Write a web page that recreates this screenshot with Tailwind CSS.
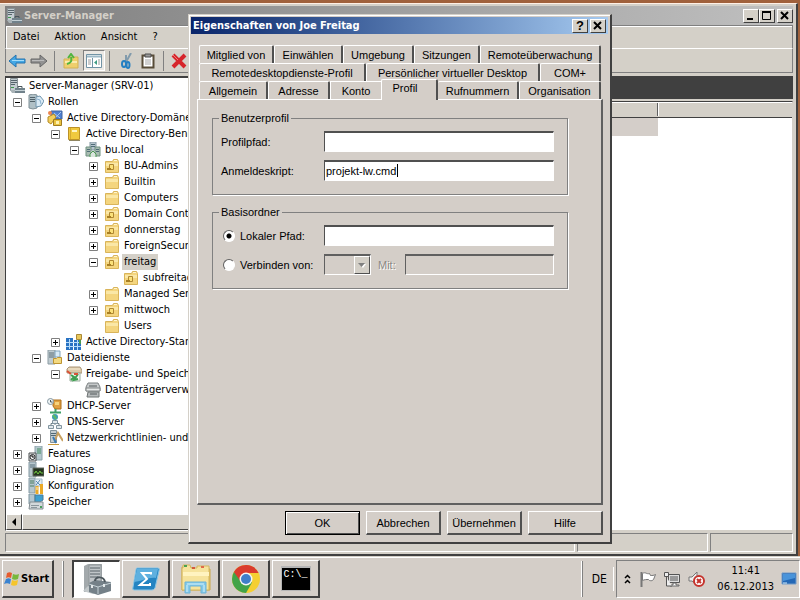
<!DOCTYPE html>
<html lang="de">
  <head>
    <title>Server-Manager</title>
    <meta charset="UTF-8" />
    <meta name="viewport" content="width=device-width, initial-scale=1.0" />
    <script src="https://cdn.jsdelivr.net/npm/@tailwindcss/browser@4"></script>
  </head>

  <body class="h-screen flex flex-col overflow-hidden bg-[#a0613c] text-black text-[11px] leading-4 font-['DejaVu_Sans_Condensed','DejaVu_Sans',sans-serif]">
    <!-- Icon definitions -->
    <svg class="hidden">
      <symbol id="server" viewBox="0 0 16 16">
        <path d="M1.500.5h7v12h-7z" fill="#c3ccd0" stroke="#8a9498" />
        <path d="M2 2.500h6M2 4.500h6M2 6.500h4" stroke="#56646c" />
        <path d="M2 9h3v1H2z" fill="#3d9a4c" />
        <path d="M1 12h6v3H3z" fill="#a9b3b7" />
        <path d="M6 10h10v5H6z" fill="#71828b" />
        <path d="M6 12.500h10" stroke="#c4d0d5" />
        <path d="M9 10V8.500h4V10" fill="none" stroke="#49565c" />
      </symbol>
      <symbol id="roles" viewBox="0 0 16 16">
        <path d="M1 1l4-1 4 1v13l-4 1-4-1z" fill="#b0c0c6" stroke="#7f8f96" />
        <path d="M2 3.500h5M2 5.500h5M2 7.500h5" stroke="#52636b" />
        <path d="M8 3l4-1 4 5-3 5-5 1z" fill="#d9eaf5" stroke="#7296ae" />
        <path d="M9 5l3 1 1 4" fill="none" stroke="#8bb2d0" />
      </symbol>
      <symbol id="addomain" viewBox="0 0 16 16">
        <path d="M4 1h11v8H4z" fill="#4f7fd0" stroke="#4366a0" />
        <path d="M7 3l6 5M14 2L8 8" stroke="#a9c8ef" />
        <path d="M1 7l6-3 2 3-5 7-3-2z" fill="#f3cf5c" stroke="#b58b26" />
        <path d="M6.500 9.500h8v6h-8z" fill="#e9c342" stroke="#a07d20" />
        <path d="M9 11h3v3H9z" fill="#fff3b0" />
        <circle cx="3" cy="3" r="2" fill="#ec8550" />
      </symbol>
      <symbol id="book" viewBox="0 0 16 16">
        <path d="M2.500 1.500h11v12h-11z" fill="#f0c93e" stroke="#bc9228" />
        <path d="M6 4h5v2H6z" fill="#fff5c1" />
        <path d="M4.500 2v11" stroke="#d6ab30" />
        <path d="M3 14.500h11" stroke="#8f8560" />
      </symbol>
      <symbol id="domain" viewBox="0 0 16 16">
        <path d="M5 0h6v8H5z" fill="#b7c4cd" stroke="#8598a3" />
        <path d="M1 5h5v9H1zM10 5h5v9h-5z" fill="#a9bcb2" stroke="#6f9080" />
        <path d="M6 2.500h4M6 4.500h4M2 7.500h3M11 7.500h3M2 9.500h3M11 9.500h3" stroke="#4f6d76" />
        <path d="M5 15v-3l3-3 3 3v3" fill="#d9e4dd" stroke="#4f9a55" />
      </symbol>
      <symbol id="folder" viewBox="0 0 16 16">
        <path d="M1.500 3.500h7l1-2h4l1 2v11h-13z" fill="#f4d57e" stroke="#d9b45a" />
        <path d="M2 5h12v3H2z" fill="#fae7a6" />
        <path d="M10 2.500h3" stroke="#fff5cf" />
      </symbol>
      <symbol id="ou" viewBox="0 0 16 16">
        <use href="#folder" />
        <path d="M5.500 6.500h4v5h-4z" fill="#fbe179" stroke="#b08832" />
        <path d="M3 10h4v2H3z" fill="#a87f24" />
      </symbol>
      <symbol id="sites" viewBox="0 0 16 16">
        <path d="M0 4h7v12H0zM8 6h7v10H8z" fill="#2872c3" />
        <path d="M3.500 5v10M0 8.500h15M0 12.500h15M11.500 6v10" stroke="#b7dcfa" />
        <path d="M10.500.5h5v5h-5z" fill="#e9c85a" stroke="#aa8938" />
        <path d="M14 6v4" stroke="#4a9a52" stroke-width="2" />
      </symbol>
      <symbol id="fileserver" viewBox="0 0 16 16">
        <path d="M1 0h7v14H1z" fill="#c0ccd1" stroke="#8b9ba3" />
        <path d="M2 3h5M2 5h5M2 7h5" stroke="#5a6f79" />
        <path d="M8 1h5v6H8z" fill="#d9ebf7" stroke="#80a3ba" />
        <path d="M6.500 8.500h3l1-1h4v6h-8z" fill="#f3d980" stroke="#bd9433" />
      </symbol>
      <symbol id="share" viewBox="0 0 16 16">
        <path d="M1 3l2-2h11l2 3v3H1z" fill="#dcc9a8" stroke="#a89478" />
        <path d="M2 3h12" stroke="#f4ead4" />
        <path d="M4 7h10v8H4z" fill="#f3f6ef" stroke="#9cae9f" />
        <path d="M5 9l3 2-3 3M12 8l-4 6 4-1" stroke="#3d9f50" stroke-width="2" fill="none" />
        <path d="M1 5l4 3M8 8h4" fill="none" stroke="#d95137" stroke-width="2" />
      </symbol>
      <symbol id="disk" viewBox="0 0 16 16">
        <path d="M3 1h10l2 4v4H1V5z" fill="#c6c9ca" stroke="#7d8283" />
        <path d="M1 6h14v3H1z" fill="#e6e8e8" stroke="#818586" />
        <path d="M3 10h11v5H2z" fill="#b7bbbc" stroke="#6f7474" />
        <path d="M4 4h8M5 12h7" stroke="#555b5d" />
      </symbol>
      <symbol id="dhcp" viewBox="0 0 16 16">
        <path d="M6 2h8v9H8L6 8z" fill="#e0a040" stroke="#ae6f1b" />
        <path d="M8 4h4v3H8z" fill="#f8d37b" />
        <circle cx="3.500" cy="3.500" r="3" fill="#edf3f5" stroke="#8496a0" />
        <path d="M3.500 2v2h2" stroke="#45545c" fill="none" />
        <path d="M8.500 11v3M3 14.500h11" stroke="#3d9f68" stroke-width="2" />
      </symbol>
      <symbol id="dns" viewBox="0 0 16 16">
        <circle cx="8" cy="3" r="3" fill="#3f9db4" />
        <path d="M6 1l2 2 1 2" stroke="#59bc61" stroke-width="2" fill="none" />
        <path d="M8 6v5M4 12V9.500h8V12" stroke="#6d7f85" fill="none" />
        <path d="M5.500 6.500h5v3h-5zM1.500 11.500h5v3h-5zM9.500 11.500h5v3h-5z" fill="#e2e9ec" stroke="#8295a0" />
      </symbol>
      <symbol id="policy" viewBox="0 0 16 16">
        <path d="M3.500.5h6v12h-6z" fill="#c5ced2" stroke="#82939b" />
        <path d="M4 3.500h5M4 5.500h5" stroke="#506874" />
        <path d="M8 10l3-7 5 8" fill="none" stroke="#c7a060" stroke-width="2" />
        <path d="M6 7l3 6" stroke="#3b7ab5" stroke-width="2" />
        <path d="M1 14.500h11" stroke="#c8983d" />
      </symbol>
      <symbol id="features" viewBox="0 0 16 16">
        <path d="M7 0h7v14H7z" fill="#b5c8ce" stroke="#8da2aa" />
        <path d="M9 3h4M9 5h4M9 7h4" stroke="#3e8a5c" />
        <path d="M1 7h7v8H1z" fill="#e2e4e5" stroke="#4d5153" />
        <circle cx="4.500" cy="11" r="2.500" fill="#fff" stroke="#272a2b" />
        <path d="M4 9v2h2" stroke="#000" fill="none" />
      </symbol>
      <symbol id="diagnose" viewBox="0 0 16 16">
        <path d="M1 0h7v15H1z" fill="#b9c8ce" stroke="#8397a1" />
        <path d="M2 3h5M2 5h5" stroke="#546c78" />
        <path d="M5 6h11v8H5z" fill="#25331f" stroke="#606860" />
        <path d="M6 11h1l1-2 2 3 2-3 1 2h2" fill="none" stroke="#70c744" />
      </symbol>
      <symbol id="config" viewBox="0 0 16 16">
        <path d="M1 0h6v15H1z" fill="#b5c6ce" stroke="#869aa4" />
        <path d="M2 3h4M2 5h4M2 8h4" stroke="#4c7f61" />
        <path d="M7 1h7v7H7z" fill="#e2edf4" stroke="#9fb6c5" />
        <path d="M8 3l4 4M12 2L8 7" stroke="#5989b0" />
        <path d="M9 8v8M13.500 6v10" stroke="#eaa927" stroke-width="3" />
        <path d="M9 9v3" stroke="#fff3c4" />
      </symbol>
      <symbol id="storage" viewBox="0 0 16 16">
        <path d="M1 0h6v10H1z" fill="#b2c5cf" stroke="#7f959f" />
        <path d="M7 1h8v5l-3 2H7z" fill="#3fa0cf" stroke="#487b97" />
        <path d="M2 8h13v7H1z" fill="#d3d8db" stroke="#838d92" />
        <path d="M3 11.500h8M3 13.500h6" stroke="#8b969c" />
        <path d="M12 12h2v2h-2z" fill="#499f5b" />
      </symbol>
    </svg>

    <!-- Desktop starts here -->
    <main class="relative flex-1 min-h-0 pt-[3px] pr-[2px]">
      <!-- Server-Manager window -->
      <section class="h-full flex flex-col bg-[#d4d0c8] border-t border-r-2 border-b-2 border-t-[#fff0e6] border-r-[#404040] border-b-[#404040] pl-[5px] pr-[3px] pt-[2px]">
        <header class="flex items-center h-[19px] pl-px gap-[2px] bg-linear-to-r from-[#808080] to-[#c0c0c0]">
          <svg class="size-4"><use href="#server" /></svg>
          <h1 class="flex-1 font-bold text-[#d4d0c8]">Server-Manager</h1>
          <button aria-label="Minimieren" class="w-4 h-[14px] bg-[#d4d0c8] border border-t-white border-l-white border-r-[#404040] border-b-[#404040]">
            <svg viewBox="0 0 14 12" class="w-[14px] h-3"><path d="M3 9h6" stroke="#000" stroke-width="2" /></svg>
          </button>
          <button aria-label="Maximieren" class="w-4 h-[14px] -ml-[2px] bg-[#d4d0c8] border border-t-white border-l-white border-r-[#404040] border-b-[#404040]">
            <svg viewBox="0 0 14 12" class="w-[14px] h-3"><path d="M2.500 2v7.500h8V2M2 2h9" fill="none" stroke="#000" /><path d="M2 2h9" stroke="#000" stroke-width="2" /></svg>
          </button>
          <button aria-label="Schließen" class="w-4 h-[14px] bg-[#d4d0c8] border border-t-white border-l-white border-r-[#404040] border-b-[#404040]">
            <svg viewBox="0 0 14 12" class="w-[14px] h-3"><path d="M3 2l7 7M10 2L3 9" stroke="#000" stroke-width="2" /></svg>
          </button>
        </header>

        <nav class="flex items-center gap-[15px] h-6 px-[7px] border border-[#808080] border-b-white shadow-[inset_1px_1px_#fff]">
          <button>Datei</button>
          <button>Aktion</button>
          <button>Ansicht</button>
          <button>?</button>
        </nav>

        <div class="flex items-center h-6 px-[2px] border-x border-b border-[#808080]">
          <button aria-label="Zurück" class="w-5">
            <svg viewBox="0 0 18 16" class="w-[18px] h-4"><path d="M1 8l7-6v4h9v4H8v4z" fill="#45a8e5" stroke="#2573ae" /><path d="M4 7.500h12" stroke="#a4ddfa" /></svg>
          </button>
          <button aria-label="Vorwärts" class="w-6 pl-[2px]">
            <svg viewBox="0 0 18 16" class="w-[18px] h-4"><path d="M17 8l-7-6v4H1v4h9v4z" fill="#929292" stroke="#666" /><path d="M2 7.500h12" stroke="#bbb" /></svg>
          </button>
          <span class="h-5 w-px bg-[#808080] ml-[2px] mr-2"></span>
          <button aria-label="Eine Ebene nach oben">
            <svg viewBox="0 0 16 16" class="size-4"><path d="M1 6h5l1-2h8v11H1z" fill="#efcf6d" stroke="#d3b256" /><path d="M2 9h12" stroke="#fbebad" stroke-width="2" /><path d="M4 11c4-1 5-3 4-7M5 5l3-4 3 4" fill="none" stroke="#4fb53f" stroke-width="2" /></svg>
          </button>
          <button aria-label="Konsolenstruktur" class="flex items-center justify-center w-[22px] h-[21px] ml-1 bg-[#ece9e5] border border-t-[#808080] border-l-[#808080] border-r-white border-b-white">
            <svg viewBox="0 0 16 14" class="w-4 h-[14px]"><path d="M.5.5h15v13H.5z" fill="#fff" stroke="#7193a5" /><path d="M1 2.500h14" stroke="#9cb8c7" stroke-width="2" /><path d="M2 6h3M2 8h3M2 10h3M12 6h2M12 8h2M12 10h2" stroke="#9a9a9a" /><path d="M6.500 4v9" stroke="#7193a5" /><path d="M11 6v5L8 8.500z" fill="#3e9b82" /></svg>
          </button>
          <span class="h-5 w-px bg-[#808080] ml-1 mr-2"></span>
          <button aria-label="Ausschneiden">
            <svg viewBox="0 0 16 16" class="size-4"><path d="M13 0L8 9M8 2v8" stroke="#829bac" stroke-width="2" /><ellipse cx="6" cy="11" rx="2" ry="3" fill="none" stroke="#247fc2" stroke-width="2" /><ellipse cx="10" cy="12" rx="1.500" ry="3" fill="none" stroke="#247fc2" stroke-width="2" /></svg>
          </button>
          <button aria-label="Einfügen" class="ml-[7px]">
            <svg viewBox="0 0 14 16" class="w-[14px] h-4"><path d="M1.500 2.500h11v12h-11z" fill="#fff" stroke="#584c38" stroke-width="2" /><path d="M4 1h6v3H4z" fill="#999" stroke="#4d4d4d" /><path d="M4 7h6M4 9h6M4 11h6" stroke="#a4a4a4" /></svg>
          </button>
          <span class="h-5 w-px bg-[#808080] ml-2 mr-[7px]"></span>
          <button aria-label="Löschen">
            <svg viewBox="0 0 16 16" class="size-4"><path d="M2 2l12 12M14 2L2 14" stroke="#d6252b" stroke-width="4" /><path d="M2 2l5 5" stroke="#f27c78" /></svg>
          </button>
        </div>

        <div class="flex flex-1 min-h-0 gap-1 mt-[3px]">
          <!-- Console tree -->
          <aside class="flex flex-col w-[184px] shrink-0 bg-white border border-t-2 border-t-[#404040] border-l-[#404040] border-r-white border-b-white">
            <div id="tree" class="flex-1 overflow-hidden whitespace-nowrap"></div>
            <div class="flex h-4 bg-[#dedbd6]">
              <button aria-label="Nach links" class="flex items-center justify-center w-4 bg-[#d4d0c8] border border-t-white border-l-white border-r-[#404040] border-b-[#404040]">
                <svg viewBox="0 0 4 8" class="w-1 h-2"><path d="M4 0v8L0 4z" /></svg>
              </button>
              <div class="flex-1 bg-[#d4d0c8] border border-r-0 border-t-white border-l-white border-b-[#404040]"></div>
            </div>
          </aside>

          <!-- Details pane -->
          <section class="flex flex-col flex-1">
            <div class="h-[23px] bg-[#404040]"></div>
            <div class="flex-1 mt-[2px] bg-white border border-t-[#404040] border-l-[#404040] border-b-[#d4d0c8] border-r-[#d4d0c8]">
              <div class="flex h-4 bg-[#d4d0c8] border-b border-[#404040] shadow-[inset_0_1px_#fff]">
                <div class="w-[464px] my-px border-r border-[#606060]"></div>
                <div class="flex-1 my-px border-l border-white"></div>
              </div>
              <div class="w-[464px] h-[18px] bg-[#d4cec9]"></div>
            </div>
          </section>
        </div>

        <footer class="flex gap-[2px] h-[19px] mt-[2px] mb-[2px]">
          <div class="flex-1 border border-[#808080] border-r-white border-b-white"></div>
          <div class="w-[131px] border border-[#808080] border-r-white border-b-white"></div>
          <div class="w-[83px] border border-[#808080] border-r-white border-b-white"></div>
        </footer>
      </section>

      <!-- Properties dialog -->
      <section role="dialog" aria-labelledby="dialogTitle" class="absolute left-[188px] top-[14px] w-[424px] bg-[#d4cec8] border border-[#d4d0c8] border-r-2 border-b-2 border-r-[#404040] border-b-[#404040] shadow-[inset_1px_1px_#fff] p-[2px] pb-[7px] font-['Liberation_Sans',Arial,sans-serif]">
        <header class="flex items-center h-[17px] pl-[2px] pr-[2px] gap-[2px] bg-linear-to-r from-[#0a246a] to-[#a6caf0]">
          <h2 id="dialogTitle" class="flex-1 font-bold text-white font-['DejaVu_Sans_Condensed','DejaVu_Sans',sans-serif]">Eigenschaften von Joe Freitag</h2>
          <button aria-label="Hilfe" class="w-4 h-[14px] bg-[#d4d0c8] border border-t-white border-l-white border-r-[#404040] border-b-[#404040] text-[13px] leading-3 font-bold">?</button>
          <button aria-label="Schließen" class="w-4 h-[14px] bg-[#d4d0c8] border border-t-white border-l-white border-r-[#404040] border-b-[#404040]">
            <svg viewBox="0 0 14 12" class="w-[14px] h-3"><path d="M3 2l7 7M10 2L3 9" stroke="#000" stroke-width="2" /></svg>
          </button>
        </header>

        <div class="pt-[11px] pl-[6px] pr-[5px]">
          <!-- Tabs -->
          <div role="tablist" class="px-[2px]">
            <div class="flex h-[18px]">
              <button role="tab" class="w-[75px] border-t border-l border-white border-r-2 border-r-[#505050] rounded-t-xs">Mitglied von</button>
              <button role="tab" class="w-[69px] border-t border-l border-white border-r-2 border-r-[#505050] rounded-t-xs">Einwählen</button>
              <button role="tab" class="w-[71px] border-t border-l border-white border-r-2 border-r-[#505050] rounded-t-xs">Umgebung</button>
              <button role="tab" class="w-[66px] border-t border-l border-white border-r-2 border-r-[#505050] rounded-t-xs">Sitzungen</button>
              <button role="tab" class="flex-1 border-t border-l border-white border-r-2 border-r-[#505050] rounded-t-xs">Remoteüberwachung</button>
            </div>
            <div class="flex h-[18px]">
              <button role="tab" class="w-[167px] border-t border-l border-white border-r-2 border-r-[#505050] rounded-t-xs">Remotedesktopdienste-Profil</button>
              <button role="tab" class="w-[174px] border-t border-l border-white border-r-2 border-r-[#505050] rounded-t-xs">Persönlicher virtueller Desktop</button>
              <button role="tab" class="flex-1 border-t border-l border-white border-r-2 border-r-[#505050] rounded-t-xs">COM+</button>
            </div>
            <div class="flex h-[18px] items-end">
              <button role="tab" class="w-[69px] h-[18px] border-t border-l border-white border-r-2 border-r-[#505050] rounded-t-xs">Allgemein</button>
              <button role="tab" class="w-[62px] h-[18px] border-t border-l border-white border-r-2 border-r-[#505050] rounded-t-xs">Adresse</button>
              <button role="tab" class="w-[51px] h-[18px] border-t border-l border-white">Konto</button>
              <button role="tab" aria-selected="true" class="relative w-[57px] h-[21px] -mb-px pb-1 pr-2 bg-[#d4cec8] border-t border-l border-white border-r-2 border-r-[#505050] rounded-t-xs">Profil</button>
              <button role="tab" class="w-[81px] h-[18px] border-t border-white border-r-2 border-r-[#505050] rounded-t-xs">Rufnummern</button>
              <button role="tab" class="flex-1 h-[18px] border-t border-l border-white border-r-2 border-r-[#505050] rounded-t-xs">Organisation</button>
            </div>
          </div>

          <!-- Profile tab -->
          <form role="tabpanel" class="min-h-[406px] pt-3 pl-[14px] pr-[33px] border border-white border-r-2 border-b-2 border-r-[#606060] border-b-[#606060]">
            <fieldset class="h-[83px] pl-2 pr-[13px] border border-[#808080] shadow-[1px_1px_#fff]">
              <legend class="px-[2px] -ml-[2px] leading-3">Benutzerprofil</legend>
              <div class="flex items-center h-[21px] mt-[7px]">
                <label for="profilePath" class="w-[103px]">Profilpfad:</label>
                <input id="profilePath" type="text" class="flex-1 min-w-0 h-[21px] px-px bg-white border border-t-2 border-[#505050] border-r-white border-b-white" />
              </div>
              <div class="flex items-center h-[21px] mt-2">
                <label for="loginScript" class="w-[103px]">Anmeldeskript:</label>
                <div class="relative flex flex-1 min-w-0">
                  <input id="loginScript" type="text" value="projekt-lw.cmd" class="flex-1 min-w-0 h-[21px] px-px bg-white border border-t-2 border-[#505050] border-r-white border-b-white outline-none caret-transparent" />
                  <span class="absolute left-[73px] top-1 w-px h-[13px] bg-black"></span>
                </div>
              </div>
            </fieldset>

            <fieldset class="h-[83px] mt-[11px] pl-2 pr-[13px] border border-[#808080] shadow-[1px_1px_#fff]">
              <legend class="px-[2px] -ml-[2px] leading-3">Basisordner</legend>
              <div class="flex items-center h-[21px] mt-[7px]">
                <label class="flex items-center gap-[5px] w-[103px] pl-[2px]">
                  <input type="radio" name="home" checked class="appearance-none size-3 rounded-full bg-white border border-[#606060] border-r-white border-b-white checked:bg-[radial-gradient(circle,#000_2px,#fff_3px)]" />
                  Lokaler Pfad:
                </label>
                <input type="text" aria-label="Lokaler Pfad" class="flex-1 min-w-0 h-[21px] px-px bg-white border border-t-2 border-[#505050] border-r-white border-b-white" />
              </div>
              <div class="flex items-center h-[21px] mt-2">
                <label class="flex items-center gap-[5px] w-[103px] pl-[2px]">
                  <input type="radio" name="home" class="appearance-none size-3 rounded-full bg-white border border-[#606060] border-r-white border-b-white checked:bg-[radial-gradient(circle,#000_2px,#fff_3px)]" />
                  Verbinden von:
                </label>
                <div class="relative w-[47px] h-[21px]">
                  <select disabled aria-label="Laufwerk" class="appearance-none w-full h-full border border-t-2 border-[#606060] border-r-white border-b-white"><option></option></select>
                  <span class="absolute right-px top-[2px] bottom-px flex items-center justify-center w-4 bg-[#d4d0c8] border border-t-white border-l-white border-r-[#505050] border-b-[#505050] pointer-events-none">
                    <svg viewBox="0 0 8 5" class="w-2 h-[5px]"><path d="M1 1h7L5 5z" fill="#fff" /><path d="M0 0h7L3.500 4z" fill="#808080" /></svg>
                  </span>
                </div>
                <label for="remotePath" class="w-[34px] pl-[7px] text-[#8c8985] text-shadow-[1px_1px_#fff]">Mit:</label>
                <input id="remotePath" type="text" disabled class="flex-1 min-w-0 h-[21px] border border-t-2 border-[#606060] border-r-white border-b-white" />
              </div>
            </fieldset>
          </form>

          <div class="flex justify-end gap-[6px] mt-[6px]">
            <button class="w-[75px] h-6 border border-black shadow-[inset_1px_1px_#fff,inset_-1px_-1px_#505050]">OK</button>
            <button class="w-[75px] h-6 border border-white border-r-2 border-b-2 border-r-[#505050] border-b-[#505050]">Abbrechen</button>
            <button class="w-[75px] h-6 border border-white border-r-2 border-b-2 border-r-[#505050] border-b-[#505050]">Übernehmen</button>
            <button class="w-[75px] h-6 border border-white border-r-2 border-b-2 border-r-[#505050] border-b-[#505050]">Hilfe</button>
          </div>
        </div>
      </section>
    </main>
    <!-- Desktop ends here -->

    <!-- Taskbar starts here -->
    <footer class="flex items-center h-11 shrink-0 pl-[2px] pt-px bg-[#d4cec8] border-t border-[#d4d0c8] shadow-[inset_0_1px_#fff]">
      <button class="flex items-center gap-px w-[52px] h-[38px] pl-px border border-white border-r-2 border-b-2 border-r-[#404040] border-b-[#404040] font-bold">
        <svg viewBox="0 0 16 16" class="w-4 h-4 shrink-0">
          <path d="M3 2c2-1 3-1 5 0L7 7C5 6 4 6 2 7z" fill="#e65b2d" />
          <path d="M9 3c2 1 4 1 6 0l-1 5c-2 1-4 1-6 0z" fill="#78b83b" />
          <path d="M2 8c2-1 3-1 5 0l-1 5c-2-1-4-1-6 0z" fill="#3a83d0" />
          <path d="M8 9c2 1 4 1 6 0l-1 5c-2 1-4 1-6 0z" fill="#f5c52c" />
        </svg>
        Start
      </button>
      <span class="w-[2px] h-9 ml-2 mr-2 border-l border-white bg-[#808080]"></span>
      <div class="flex flex-1 gap-[2px]">
        <button aria-label="Server-Manager" class="flex items-center justify-center w-12 h-[38px] bg-white border border-t-2 border-l-2 border-[#404040] border-r-white border-b-white">
          <svg viewBox="0 0 30 32" class="w-[30px] h-8">
            <path d="M2 2l4-2h14v27l-5 1H2z" fill="#a3a9ac" />
            <path d="M7 1h12v25H7z" fill="#c0c5c8" stroke="#8f9699" />
            <path d="M8 4h10M8 7h10M8 10h10M8 13h8" stroke="#566067" />
            <path d="M1 27l5-5 12 5-7 3z" fill="#c2c8ca" />
            <path d="M7 19l6-3 16 2v9l-13 4-9-3z" fill="#748088" />
            <path d="M7 20l9 3 13-4M16 23v7" stroke="#c4d0d5" fill="none" />
            <path d="M13 17c0-5 9-5 10 1" fill="none" stroke="#4d575d" stroke-width="2" />
            <path d="M10 21v3M22 20v3" stroke="#e2e7e9" stroke-width="2" />
          </svg>
        </button>
        <button aria-label="PowerShell" class="flex items-center justify-center w-12 h-[38px] border border-white border-r-2 border-b-2 border-r-[#404040] border-b-[#404040]">
          <svg viewBox="0 0 30 26" class="w-[30px] h-[26px]">
            <path d="M6 2h21q2 0 1 3l-4 17q-1 2-3 2H3q-2 0-1-3L5 4q0-2 1-2z" fill="#2484c2" stroke="#89c5e6" />
            <path d="M6 3h21l-2 9C17 11 12 15 3 16z" fill="#5fb0df" />
            <path d="M20 8.500V7h-9l5 6-7 6h10v-2" fill="none" stroke="#fff" stroke-width="2" />
          </svg>
        </button>
        <button aria-label="Explorer" class="flex items-center justify-center w-12 h-[38px] border border-white border-r-2 border-b-2 border-r-[#404040] border-b-[#404040]">
          <svg viewBox="0 0 32 30" class="w-8 h-[30px]">
            <path d="M2 3h9l1 2h18v21H2z" fill="#edcc6d" stroke="#c7a54b" />
            <path d="M3 1h7l1 3h6V2h12v24H2V4h1z" fill="#f6e39c" stroke="#d4b65e" />
            <path d="M4 2h3" stroke="#4aa24e" stroke-width="2" /><path d="M12 4h3" stroke="#d35a3e" stroke-width="2" /><path d="M21 3h3" stroke="#e06b4a" stroke-width="2" />
            <path d="M3 8h26v4H3z" fill="#fff3c0" />
            <path d="M5 29V18h21v11h-5v-7H10v7z" fill="#83c9e8" stroke="#6db3d8" />
            <path d="M7 20h17M7 21v7M24 21v7" stroke="#d4f1fb" />
          </svg>
        </button>
        <button aria-label="Chrome" class="flex items-center justify-center w-12 h-[38px] border border-white border-r-2 border-b-2 border-r-[#404040] border-b-[#404040]">
          <svg viewBox="0 0 30 30" class="w-[30px] h-[30px]">
            <circle cx="15" cy="15" r="14" fill="#f5cf33" />
            <path d="M15 15L2.900 8A14 14 0 0 0 15 29l6-10.500z" fill="#42a349" />
            <path d="M2.900 8A14 14 0 0 1 27.600 9H15v6l-5 3z" fill="#da3b2d" />
            <circle cx="15" cy="15" r="6.500" fill="#f4f5f5" />
            <circle cx="15" cy="15" r="5" fill="#3f7fca" />
          </svg>
        </button>
        <button aria-label="Eingabeaufforderung" class="flex items-center justify-center w-12 h-[38px] border border-white border-r-2 border-b-2 border-r-[#404040] border-b-[#404040]">
          <span class="block w-[30px] h-[25px] pl-[2px] bg-black border border-t-2 border-[#b5b5b5] text-white text-[10px] leading-[14px] text-left font-['Liberation_Mono',monospace]">C:\_</span>
        </button>
      </div>

      <span class="w-[2px] h-9 border-l border-white bg-[#808080]"></span>
      <button class="w-[30px] pl-[2px] text-center text-xs">DE</button>
      <span class="w-px h-6 mr-[2px] bg-white"></span>
      <div class="flex items-center h-[38px] pl-[7px] border border-[#808080] border-r-white border-b-white">
        <button aria-label="Ausgeblendete Symbole">
          <svg viewBox="0 0 7 10" class="w-[7px] h-[10px] mr-[9px]"><path d="M1 4l2.500-2.500L6 4M1 9l2.500-2.500L6 9" fill="none" stroke="#000" stroke-width="1.500" /></svg>
        </button>
        <button aria-label="Wartungscenter">
          <svg viewBox="0 0 16 16" class="size-4 mr-2"><path d="M1.500 1v15" stroke="#777" stroke-width="2" /><path d="M2.500 2.500c3-2 4 1 7 0l1 2c2 0 3 0 5-1l-2 5c-2 2-3 1-4 1l-1-1c-2 0-4 0-6 1z" fill="#fff" stroke="#777" /></svg>
        </button>
        <button aria-label="Netzwerk">
          <svg viewBox="0 0 16 16" class="size-4 mr-2"><path d="M4.500 3.500h11v8h-11z" fill="#ddd" stroke="#555" /><path d="M6 5h8v5H6z" fill="#999" /><path d="M9 12h3v2h3v1H6v-1h3z" fill="#fff" stroke="#666" /><path d="M.5 1.500h4v4h-4zM2.500 6v9H8" fill="#eee" stroke="#555" /></svg>
        </button>
        <button aria-label="Lautstärke">
          <svg viewBox="0 0 17 16" class="w-[17px] h-4 mr-3"><path d="M1 6h3l5-5v13L4 10H1z" fill="#eee" stroke="#777" /><circle cx="11" cy="10" r="5" fill="#fff" stroke="#c5332c" stroke-width="2" /><path d="M9 8l4 4M13 8l-4 4" stroke="#c5332c" stroke-width="2" /></svg>
        </button>
        <time datetime="2013-12-06T11:41" class="text-center">11:41<br />06.12.2013</time>
        <button aria-label="Desktop anzeigen" class="ml-[7px] mr-[2px]">
          <svg viewBox="0 0 16 14" class="w-4 h-[14px]"><path d="M1 1h14v11H1z" fill="#2468b6" stroke="#729cc9" /><path d="M2 2h12v4L2 9z" fill="#4a94da" /><path d="M2 11h4" stroke="#d3edff" /></svg>
        </button>
      </div>
    </footer>
    <!-- Taskbar ends here -->

    <script>
      // depth, expander, icon, label
      var nodes = [
        [0, "", "server", "Server-Manager (SRV-01)"],
        [1, "-", "roles", "Rollen"],
        [2, "-", "addomain", "Active Directory-Domänendienste"],
        [3, "-", "book", "Active Directory-Benutzer"],
        [4, "-", "domain", "bu.local"],
        [5, "+", "ou", "BU-Admins"],
        [5, "+", "folder", "Builtin"],
        [5, "+", "folder", "Computers"],
        [5, "+", "ou", "Domain Controllers"],
        [5, "+", "ou", "donnerstag"],
        [5, "+", "folder", "ForeignSecurityPrincipals"],
        [5, "-", "ou", "freitag"],
        [6, "", "ou", "subfreitag"],
        [5, "+", "folder", "Managed Service Accounts"],
        [5, "+", "ou", "mittwoch"],
        [5, "", "folder", "Users"],
        [3, "+", "sites", "Active Directory-Standorte"],
        [2, "-", "fileserver", "Dateidienste"],
        [3, "-", "share", "Freigabe- und Speicherverwaltung"],
        [4, "", "disk", "Datenträgerverwaltung"],
        [2, "+", "dhcp", "DHCP-Server"],
        [2, "+", "dns", "DNS-Server"],
        [2, "+", "policy", "Netzwerkrichtlinien- und Zugriffsdienste"],
        [1, "+", "features", "Features"],
        [1, "+", "diagnose", "Diagnose"],
        [1, "+", "config", "Konfiguration"],
        [1, "+", "storage", "Speicher"],
      ];

      var tree = document.getElementById("tree");
      nodes.forEach(function (node) {
        var row = document.createElement("div");
        row.className = "flex items-center h-4";
        row.style.paddingLeft = node[0] * 19 - 12 + "px";
        if (node[0] === 0) {
          row.style.paddingLeft = "3px";
        }

        var box = '<span class="w-[9px] mr-[6px] shrink-0"></span>';
        if (node[1]) {
          var sign = node[1] === "+" ? "M2 4.5h5M4.5 2v5" : "M2 4.5h5";
          box =
            '<button class="mr-[6px] shrink-0" aria-label="' + node[3] + '">' +
            '<svg viewBox="0 0 9 9" class="size-[9px]"><path d="M.5.5h8v8h-8z" fill="#fff" stroke="#808080"/>' +
            '<path d="' + sign + '" stroke="#000"/></svg></button>';
        }
        if (node[0] === 0) {
          box = "";
        }

        row.innerHTML =
          box +
          '<svg class="size-4 shrink-0"><use href="#' + node[2] + '"/></svg>' +
          '<span class="ml-[2px] px-[2px]">' + node[3] + "</span>";
        if (node[3] === "freitag") {
          row.lastChild.classList.add("bg-[#d4d0c8]");
        }
        tree.appendChild(row);
      });
    </script>
  </body>
</html>
